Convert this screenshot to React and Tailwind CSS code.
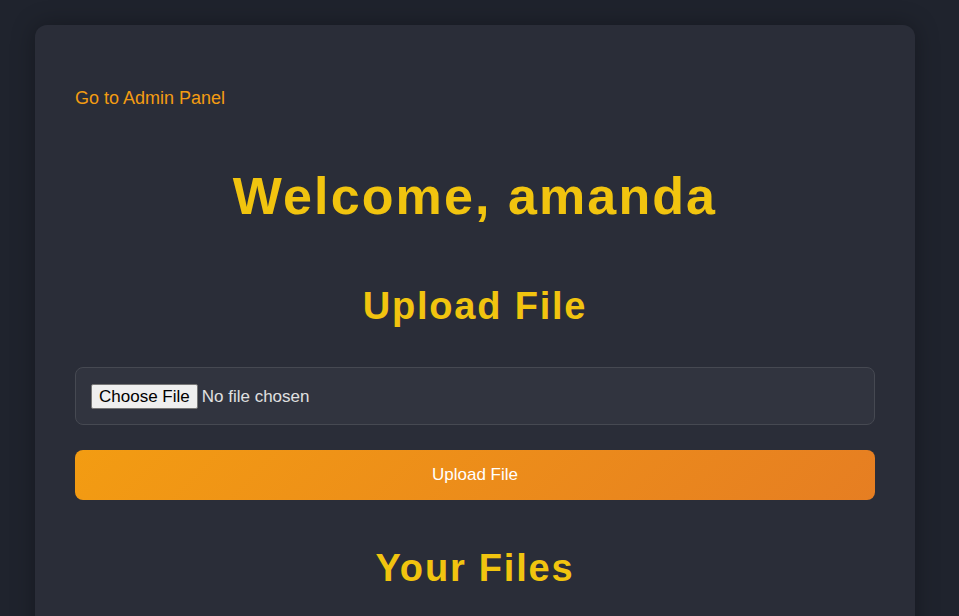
export default function App() {
  return (
    <div className="min-h-screen w-full bg-[#1f232d] pt-[25px] pl-[35px] font-['Liberation_Sans',Arial,sans-serif]">
      <div className="w-[880px] min-h-[700px] rounded-[12px] bg-[#2a2d38] px-[40px] pt-[60px] pb-[40px] shadow-[0_0_24px_rgba(0,0,0,0.3)]">
        <div className="text-[18px] leading-[27px]">
          <a href="#" className="text-[#f39c12]">Go to Admin Panel</a>
        </div>
        <h1 className="mt-[53px] text-center text-[52px] leading-[62px] font-bold tracking-[2.1px] text-[#f1c40f]">
          Welcome, amanda
        </h1>
        <h2 className="mt-[56px] text-center text-[38px] leading-[46px] font-bold tracking-[1.8px] text-[#f1c40f]">
          Upload File
        </h2>
        <div className="mt-[38px] h-[58px] flex items-center rounded-[8px] border border-[#464952] bg-[#31343f] px-[15px]">
          <input
            type="file"
            className="text-[17px] leading-[19px] text-[#e0e0e0] file:mr-[4px] file:rounded-[2px] file:border file:border-[#767676] file:bg-[#efefef] file:px-[7px] file:py-[2px] file:text-[17px] file:leading-[19px] file:text-black"
          />
        </div>
        <button className="mt-[25px] h-[50px] w-full rounded-[8px] bg-[linear-gradient(135deg,#f39c12,#e67e22)] text-[17px] text-white">
          Upload File
        </button>
        <h2 className="mt-[45px] text-center text-[38px] leading-[46px] font-bold tracking-[1.8px] text-[#f1c40f]">
          Your Files
        </h2>
      </div>
    </div>
  );
}
